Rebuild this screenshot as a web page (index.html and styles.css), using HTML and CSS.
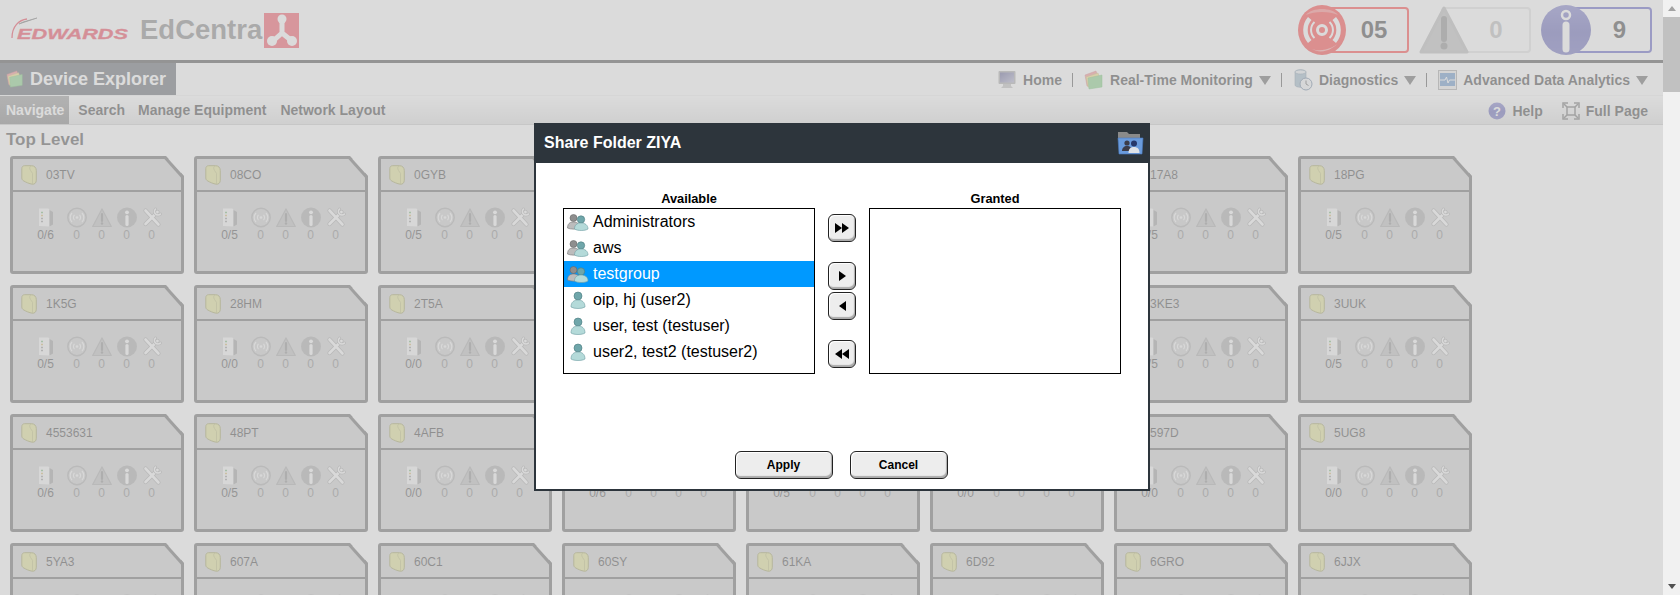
FILE: index.html
```html
<!DOCTYPE html>
<html lang="en">
<head>
  <meta charset="UTF-8" />
  <title>Device Explorer | EdCentra</title>
  <link rel="stylesheet" href="styles.css">
</head>
<body>
  <!-- shared icons -->
  <svg class="defs" aria-hidden="true">
    <defs>
      <radialGradient id="redBall" cx="50%" cy="45%" r="60%">
        <stop offset="0" stop-color="#f00"/><stop offset=".75" stop-color="#f00"/><stop offset="1" stop-color="#e00"/>
      </radialGradient>
      <linearGradient id="blueBall" x1="0" y1="0" x2="0" y2="1">
        <stop offset="0" stop-color="#5050b8"/><stop offset=".55" stop-color="#2c2c9c"/><stop offset="1" stop-color="#3a3aa8"/>
      </linearGradient>
      <linearGradient id="screen" x1="0" y1="0" x2="1" y2="1">
        <stop offset="0" stop-color="#2a2a70"/><stop offset="1" stop-color="#9a9ac0"/>
      </linearGradient>
    </defs>

    <symbol id="i-folders" viewBox="0 0 20 20">
      <path d="M1 5 12 1l1 3-9 12-1 0z" fill="#f26a6a" stroke="#c44" stroke-width=".5"/>
      <path d="M2 7 14 3l1 3-9 11-2 0z" fill="#f5d35a" stroke="#b93" stroke-width=".5"/>
      <path d="M4 8 18 5v12L5 19z" fill="#5fc35f" stroke="#3a3" stroke-width=".5"/>
    </symbol>
    <symbol id="i-folder" viewBox="0 0 16 20">
      <path d="M3.500.7h7c3 0 4.800 2 4.800 5v9.500c0 3-2 4.200-4 4-3-.4-6.500-2-8.500-3.200-1.200-.7-2-1.500-2-3V3.500C.8 1.800 2 .7 3.500.7z" fill="#d9d970" stroke="#838330"/>
      <path d="M10.500.9c-2 .2-2.300 2.500-1 4.500l2 3v11" fill="none" stroke="#a3a348" stroke-width=".8"/>
    </symbol>
    <symbol id="i-device" viewBox="0 0 20 21">
      <path d="M3 1.500h9.500l1 1.500v16.500L3 19z" fill="#f2f2f2"/>
      <path d="M13.500 3l3.500 2v12.500l-3.500 2z" fill="#808080"/>
      <path d="M5 5.500h2" stroke="#4fa04f" stroke-width="1.300"/>
      <path d="M5 8.500h2" stroke="#c8a040" stroke-width="1.300"/>
      <path d="M5 11.500h2" stroke="#777" stroke-width="1.300"/>
      <path d="M5 14.500h2" stroke="#777" stroke-width="1.300"/>
    </symbol>
    <symbol id="i-alarm" viewBox="0 0 20 20">
      <circle cx="10" cy="10" r="9.200" fill="#c0c0c0" stroke="#909090" stroke-width="1.400"/>
      <circle cx="10" cy="10" r="1.300" fill="#f4f4f4"/>
      <path d="M7.500 7.500a3.500 3.500 0 0 0 0 5M12.500 7.500a3.500 3.500 0 0 1 0 5M5 5.500a6.500 6.500 0 0 0 0 9M15 5.500a6.500 6.500 0 0 1 0 9" fill="none" stroke="#f4f4f4" stroke-width="1.100"/>
    </symbol>
    <symbol id="i-warn" viewBox="0 0 20 20">
      <path d="M10 1.500 19.300 19H.7z" fill="#a8a8a8" stroke="#8c8c8c" stroke-linejoin="round" stroke-width="1.200"/>
      <path d="M10 6.500v7" stroke="#6a6a6a" stroke-width="2.200" stroke-linecap="round"/>
      <circle cx="10" cy="16" r="1.200" fill="#6a6a6a"/>
    </symbol>
    <symbol id="i-info" viewBox="0 0 20 20">
      <circle cx="10" cy="10" r="10" fill="#8e8e8e"/>
      <circle cx="10" cy="4.800" r="1.900" fill="#f8f8f8"/>
      <path d="M10 9v8" stroke="#f8f8f8" stroke-width="3.200" stroke-linecap="round"/>
    </symbol>
    <symbol id="i-tools" viewBox="0 0 20 20">
      <g fill="none" stroke-linecap="round">
        <path d="M3.500 3l13 14M15.500 4.500 3.500 16.500" stroke="#8e8e8e" stroke-width="4.200"/>
        <path d="M3.500 3l13 14M15.500 4.500 3.500 16.500" stroke="#f8f8f8" stroke-width="2.600"/>
        <path d="M13.500 1.500a3.500 3.500 0 0 0 5 5" stroke="#8e8e8e" stroke-width="3"/>
        <path d="M13.500 1.500a3.500 3.500 0 0 0 5 5" stroke="#f8f8f8" stroke-width="1.600"/>
      </g>
    </symbol>
    <symbol id="i-group" viewBox="0 0 22 18">
      <circle cx="6.500" cy="5" r="3.500" fill="#8e8e8e" stroke="#666" stroke-width=".6"/>
      <path d="M.5 15c0-4 2-6 6-6s6 2 6 6c-3 1.500-9 1.500-12 0z" fill="#bcbcbc" stroke="#777" stroke-width=".6"/>
      <circle cx="14" cy="6.500" r="3.700" fill="#6fa6aa" stroke="#4a7a7e" stroke-width=".6"/>
      <path d="M7.500 16c0-4 2.500-6 6.500-6s7 2 7 6c-3 2-10.500 2-13.500 0z" fill="#b4dad9" stroke="#6f9ea2" stroke-width=".6"/>
    </symbol>
    <symbol id="i-user" viewBox="0 0 16 18">
      <circle cx="8" cy="5" r="4" fill="#6fa6aa" stroke="#4a7a7e" stroke-width=".6"/>
      <path d="M1 16c0-5 3-7 7-7s7 2 7 7c-3 2-11 2-14 0z" fill="#b4dad9" stroke="#6f9ea2" stroke-width=".6"/>
    </symbol>
  </svg>

  <div class="page">
    <header class="topbar">
      <div class="brand">
        <svg class="edwards" width="122" height="30" viewBox="0 0 122 30">
          <path d="M16 4C8 5 1 11 1 23" fill="none" stroke="#e8001c" stroke-width="1.300"/>
          <path d="M8 9 26 3 12 7z" fill="#333" stroke="#333" stroke-width=".6"/>
          <text x="6" y="24" textLength="111" lengthAdjust="spacingAndGlyphs" class="edwards-text">EDWARDS</text>
        </svg>
        <span class="product">EdCentra</span>
        <svg class="mark" width="35" height="35" viewBox="0 0 35 35">
          <rect width="35" height="35" fill="#f01a2e"/>
          <path d="M18 6v14M18 20 9 28M18 20l10 8" stroke="#fff" stroke-width="5"/>
          <circle cx="18" cy="6" r="4.500" fill="#fff"/><circle cx="8" cy="28" r="5" fill="#fff"/><circle cx="28" cy="28" r="5" fill="#fff"/>
        </svg>
      </div>
      <div class="badges">
        <div class="badge badge-red">
          <svg class="badge-icon" viewBox="0 0 48 50">
            <ellipse cx="24" cy="25" rx="24" ry="25" fill="url(#redBall)"/>
            <path d="M8 10C14 2 34 2 40 10 32 6 16 6 8 10z" fill="#fff" opacity=".35"/>
            <path d="M14 44C24 50 36 44 42 36 38 42 24 48 14 44z" fill="#fff" opacity=".5"/>
            <circle cx="24" cy="25" r="4.500" fill="none" stroke="#fff" stroke-width="3"/>
            <path d="M16.500 17a11 11 0 0 0 0 16M31.500 17a11 11 0 0 1 0 16" fill="none" stroke="#fff" stroke-width="2"/>
            <path d="M10 12 13.500 15a15 15 0 0 0 0 20L10 38a20 20 0 0 1 0-26zM38 12l-3.500 3a15 15 0 0 1 0 20l3.500 3a20 20 0 0 0 0-26z" fill="#fff"/>
          </svg>
          <span class="badge-num">05</span>
        </div>
        <div class="badge badge-grey">
          <svg class="badge-icon" viewBox="0 0 50 50">
            <path d="M25 3 48 47H2z" fill="#a8a8a8" stroke="#a0a0a0" stroke-width="3" stroke-linejoin="round"/>
            <path d="M25 14v20" stroke="#666" stroke-width="6" stroke-linecap="round"/>
            <circle cx="25" cy="41" r="3.500" fill="#666"/>
          </svg>
          <span class="badge-num">0</span>
        </div>
        <div class="badge badge-blue">
          <svg class="badge-icon" viewBox="0 0 50 50">
            <circle cx="25" cy="25" r="25" fill="url(#blueBall)"/>
            <circle cx="25" cy="10" r="4" fill="none" stroke="#fff" stroke-width="2.500"/>
            <path d="M25 20v24" stroke="#fff" stroke-width="7" stroke-linecap="round"/>
          </svg>
          <span class="badge-num">9</span>
        </div>
      </div>
    </header>

    <div class="titlebar">
      <div class="title">
        <svg class="ico-18"><use href="#i-folders"/></svg>
        <h1>Device Explorer</h1>
      </div>
      <nav class="mainnav">
        <a class="navlink home" href="#">
          <svg width="18" height="20" viewBox="0 0 18 20">
            <rect x=".5" y="1" width="17" height="13" rx="1" fill="#8c8c8c"/><rect x="2" y="2.500" width="14" height="10" fill="url(#screen)"/>
            <path d="M5 14h8v2l2 2H3l2-2z" fill="#a9a9a9"/>
          </svg>
          Home
        </a>
        <span class="sep"></span>
        <a class="navlink" href="#"><svg class="ico-20"><use href="#i-folders"/></svg>Real-Time Monitoring<i class="caret"></i></a>
        <span class="sep"></span>
        <a class="navlink" href="#">
          <svg width="20" height="22" viewBox="0 0 20 22">
            <path d="M2 3c0-3 11-3 11 0v13c0 3-11 3-11 0z" fill="#7ea0b8" stroke="#4a6a85" stroke-width=".6"/>
            <ellipse cx="7.500" cy="3" rx="5.500" ry="2" fill="#dfe8ee" stroke="#4a6a85" stroke-width=".6"/>
            <circle cx="13" cy="15" r="6" fill="#eef2f4" stroke="#3a5a80"/><path d="M13 11.500V15l2.500 1.500" fill="none" stroke="#333"/>
          </svg>
          Diagnostics<i class="caret"></i>
        </a>
        <span class="sep"></span>
        <a class="navlink" href="#">
          <svg width="19" height="20" viewBox="0 0 19 20">
            <rect x=".5" y=".5" width="18" height="19" fill="#e6e6e6" stroke="#888"/><rect x="2" y="3" width="15" height="13" fill="#2f6fb8"/>
            <path d="M2 10h5l1.500-3 1.500 6 1.500-3H17" fill="none" stroke="#fff"/>
          </svg>
          Advanced Data Analytics<i class="caret"></i>
        </a>
      </nav>
    </div>

    <div class="subnav">
      <div class="tabs">
        <a class="tab active" href="#">Navigate</a>
        <a class="tab short" href="#">Search</a>
        <a class="tab" href="#">Manage Equipment</a>
        <a class="tab" href="#">Network Layout</a>
      </div>
      <div class="tools">
        <a class="navlink" href="#">
          <svg class="ico-18" viewBox="0 0 18 18">
            <circle cx="9" cy="9" r="8.500" fill="url(#blueBall)"/>
            <text x="9" y="14" class="help-mark">?</text>
          </svg>
          Help
        </a>
        <a class="navlink" href="#">
          <svg class="ico-18" viewBox="0 0 18 18" fill="none" stroke="#444" stroke-width="1.500">
            <path d="M1 6V1h5M12 1h5v5M17 12v5h-5M6 17H1v-5"/><rect x="5" y="5" width="8" height="8"/>
            <path d="M2 2l3 3M16 2l-3 3M16 16l-3-3M2 16l3-3"/>
          </svg>
          Full Page
        </a>
      </div>
    </div>

    <main class="content">
      <h2>Top Level</h2>
      <div class="card-grid" id="cardGrid"></div>
    </main>

    <!-- dims the page behind the dialog -->
    <div class="dimmer"></div>

    <section class="dialog">
      <div class="dialog-head">
        <h3>Share Folder ZIYA</h3>
        <svg width="27" height="24" viewBox="0 0 27 24">
          <path d="M1 1h9l2 2h11v6H1z" fill="#8a8a8a"/>
          <path d="M1 7h25l-1 16H2z" fill="#6a9bdc" stroke="#4a7ac0" stroke-width=".6"/>
          <circle cx="10" cy="12" r="2.600" fill="#3c3c48"/><path d="M5 20c0-3 2-5 5-5s5 2 5 5z" fill="#3c3c48"/>
          <circle cx="17" cy="12.500" r="3" fill="#26386a"/><path d="M11.500 22c0-4 2-6 5.500-6s5.500 2 5.500 6z" fill="#dfe3e8"/>
        </svg>
      </div>
      <div class="dialog-body">
        <div class="picker">
          <div class="pick-col">
            <div class="pick-label">Available</div>
            <ul class="listbox">
              <li><svg class="ico-group"><use href="#i-group"/></svg>Administrators</li>
              <li><svg class="ico-group"><use href="#i-group"/></svg>aws</li>
              <li class="selected"><svg class="ico-group"><use href="#i-group"/></svg>testgroup</li>
              <li><svg class="ico-group"><use href="#i-user"/></svg>oip, hj (user2)</li>
              <li><svg class="ico-group"><use href="#i-user"/></svg>user, test (testuser)</li>
              <li><svg class="ico-group"><use href="#i-user"/></svg>user2, test2 (testuser2)</li>
            </ul>
          </div>
          <div class="moves">
            <button class="move" type="button"><i class="tri"></i><i class="tri"></i></button>
            <button class="move far" type="button"><i class="tri"></i></button>
            <button class="move" type="button"><i class="tri back"></i></button>
            <button class="move far" type="button"><i class="tri back"></i><i class="tri back"></i></button>
          </div>
          <div class="pick-col">
            <div class="pick-label">Granted</div>
            <ul class="listbox"></ul>
          </div>
        </div>
        <div class="dialog-actions">
          <button class="btn" type="button">Apply</button>
          <button class="btn" type="button">Cancel</button>
        </div>
      </div>
    </section>
  </div>

  <div class="scrollbar">
    <i class="arrow-up"></i>
    <div class="thumb"></div>
    <i class="arrow-down"></i>
  </div>

  <script src="script.js"></script>
</body>
</html>
```

FILE: styles.css
```css
/* Reset and base styles */
* {
  box-sizing: border-box;
  margin: 0;
  padding: 0;
}
body {
  font-family: "Liberation Sans", Arial, sans-serif;
  background-color: #fff;
  color: #000;
  display: flex;
  height: 100vh;
  overflow: hidden;
}
a {
  color: inherit;
  text-decoration: none;
}
svg {
  display: block;
  flex: none;
}
.defs {
  position: absolute;
  width: 0;
  height: 0;
}
.ico-18 { width: 18px; height: 18px; }
.ico-20 { width: 20px; height: 20px; }

.page {
  flex: 1;
  min-width: 0;
  position: relative;
  overflow: hidden;
}

/* Top bar */
.topbar {
  height: 63px;
  border-bottom: 3px solid #111;
  display: flex;
  justify-content: space-between;
  padding-right: 11px;
}
.brand {
  display: flex;
  align-items: center;
  padding-left: 11px;
}
.edwards-text {
  font: italic bold 15px "Liberation Sans", Arial, sans-serif;
  fill: #e8001c;
  stroke: #e8001c;
  stroke-width: 0.35px;
}
.product {
  font-size: 27.5px;
  font-weight: bold;
  color: #5a5a5a;
  margin-left: 7px;
}
.mark { margin-left: 2px; }

.badges {
  display: flex;
  gap: 10px;
  padding-top: 5px;
}
.badge {
  display: flex;
  width: 112px;
  height: 50px;
  position: relative;
  align-items: center;
}
.badge::before {
  content: "";
  position: absolute;
  left: 22px;
  right: 0;
  top: 2px;
  bottom: 2px;
  border: 2px solid;
  border-radius: 4px;
}
.badge-red { color: #f00; }
.badge-grey { color: #d9d9d9; width: 112px; }
.badge-blue { color: #2b2bb1; width: 111px; }
.badge-icon {
  width: 50px;
  height: 50px;
  position: relative;
}
.badge-num {
  flex: 1;
  text-align: center;
  font-size: 24px;
  font-weight: bold;
  color: #000;
}
.badge-red .badge-num { padding-right: 8px; }
.badge-grey .badge-num { color: #a4a4a4; padding-right: 8px; }
.badge-blue .badge-num { padding-right: 4px; }

/* Title row */
.titlebar {
  height: 32px;
  display: flex;
  justify-content: space-between;
}
.title {
  width: 176px;
  background-color: #2d353c;
  display: flex;
  align-items: center;
  gap: 6px;
  padding-left: 6px;
}
.title h1 {
  font-size: 18px;
  color: #fff;
}
.mainnav {
  display: flex;
  align-items: center;
  padding: 2px 15px 0 0;
}
.navlink {
  display: flex;
  align-items: center;
  gap: 6px;
  font-size: 14px;
  font-weight: bold;
}
.navlink.home { gap: 7px; }
.sep {
  width: 1px;
  height: 14px;
  background-color: #222;
  margin: 0 11px 0 10px;
}
.caret {
  width: 0;
  height: 0;
  border-left: 6px solid transparent;
  border-right: 6px solid transparent;
  border-top: 9px solid #333;
}

/* Sub navigation */
.subnav {
  height: 30px;
  display: flex;
  justify-content: space-between;
  background: linear-gradient(#fff, #d8d8d8);
  border-top: 1px solid #eee;
  border-bottom: 1px solid #bbb;
}
.tabs {
  display: flex;
  align-items: stretch;
  font-size: 14px;
  font-weight: bold;
}
.tab {
  display: flex;
  align-items: center;
  padding: 0 5px 0 6px;
  margin-right: 3px;
}
.tab.short { margin-right: 2px; }
.tab.active {
  background: linear-gradient(#777, #555);
  color: #fff;
}
.tools {
  display: flex;
  align-items: center;
  gap: 19px;
  padding: 1px 15px 0 0;
}
.help-mark {
  font: bold 13px "Liberation Sans", Arial, sans-serif;
  fill: #fff;
  text-anchor: middle;
}

/* Folder cards */
.content h2 {
  font-size: 17px;
  line-height: 30px;
  padding-left: 6px;
  color: #111;
}
.card-grid {
  display: grid;
  grid-template-columns: repeat(8, 174px);
  gap: 11px 10px;
  padding: 1px 0 0 10px;
}
.card {
  position: relative;
  height: 118px;
  background-color: #c1c1c1;
  border: 3px solid #393939;
  border-radius: 3px;
  clip-path: polygon(0 0, 156px 0, 174px 20px, 174px 100%, 0 100%);
}
.card::after {
  content: "";
  position: absolute;
  left: 146px;
  top: 6.5px;
  width: 30px;
  height: 3px;
  background-color: #393939;
  transform: rotate(48deg);
}
.card-head {
  height: 33px;
  border-bottom: 2px solid #393939;
  display: flex;
  align-items: center;
  gap: 9px;
  padding-left: 8px;
  font-size: 12px;
}
.card-head svg {
  width: 16px;
  height: 20px;
}
.card-stats {
  display: flex;
  padding: 15px 0 0 20px;
}
.stat {
  width: 25px;
  display: flex;
  flex-direction: column;
  align-items: center;
  font-size: 12px;
  line-height: 14px;
  color: #5d5d5d;
}
.stat svg {
  width: 20px;
  height: 21px;
}
.stat.devices {
  margin-right: 6px;
  color: #111;
}

/* Overlay and dialog */
.dimmer {
  position: absolute;
  top: 0;
  left: 0;
  right: 0;
  bottom: 0;
  background-color: rgba(204, 204, 204, 0.7);
}
.dialog {
  position: absolute;
  left: 534px;
  top: 123px;
  width: 616px;
  height: 368px;
  background-color: #fff;
  border: 2px solid #2d353c;
  border-top: 0;
}
.dialog-head {
  height: 40px;
  background-color: #2d353c;
  display: flex;
  align-items: center;
  justify-content: space-between;
  margin: 0 -2px;
  padding: 0 6px 0 10px;
}
.dialog-head h3 {
  font-size: 16px;
  color: #fff;
}
.dialog-body {
  padding: 29px 27px 0;
}
.picker {
  display: flex;
}
.pick-col {
  width: 252px;
}
.pick-label {
  font-size: 12.8px;
  font-weight: bold;
  line-height: 14px;
  padding-bottom: 2px;
  text-align: center;
}
.listbox {
  list-style: none;
  height: 166px;
  border: 1px solid #000;
  font-size: 16px;
}
.listbox li {
  height: 26px;
  display: flex;
  align-items: center;
  gap: 4px;
  padding-left: 3px;
}
.listbox li.selected {
  background-color: #09f;
  color: #fff;
}
.ico-group {
  width: 22px;
  height: 18px;
}
.moves {
  width: 54px;
  padding-top: 22px;
  display: flex;
  flex-direction: column;
  align-items: center;
  gap: 2px;
}
.move {
  width: 28px;
  height: 28px;
  display: flex;
  align-items: center;
  justify-content: center;
  background-color: #ededed;
  border: 1px solid #222;
  border-radius: 6px;
  box-shadow: inset -1px -2px 1px #aaa, inset 1px 1px 1px #fff;
}
.move.far { margin-top: 18px; }
.tri {
  width: 0;
  height: 0;
  border-top: 5px solid transparent;
  border-bottom: 5px solid transparent;
  border-left: 7px solid #000;
}
.tri.back {
  border-left: 0;
  border-right: 7px solid #000;
}
.dialog-actions {
  display: flex;
  justify-content: center;
  gap: 17px;
  margin-top: 77px;
  padding-right: 2px;
}
.btn {
  width: 98px;
  height: 28px;
  font-family: inherit;
  font-size: 12px;
  font-weight: bold;
  color: #000;
  background-color: #ededed;
  border: 1px solid #222;
  border-radius: 6px;
  box-shadow: inset -1px -2px 1px #aaa, inset 1px 1px 1px #fff;
}

/* Browser scrollbar */
.scrollbar {
  width: 17px;
  flex: none;
  background-color: #f1f1f1;
  position: relative;
  display: flex;
  flex-direction: column;
  align-items: center;
}
.arrow-up {
  width: 0;
  height: 0;
  margin: 6px 0 6px;
  border-left: 4px solid transparent;
  border-right: 4px solid transparent;
  border-bottom: 5px solid #a3a3a3;
}
.thumb {
  width: 100%;
  height: 75px;
  background-color: #c1c1c1;
}
.arrow-down {
  width: 0;
  height: 0;
  margin: auto 0 6px;
  border-left: 4px solid transparent;
  border-right: 4px solid transparent;
  border-top: 5px solid #505050;
}
```

FILE: script.js
```js
// folder name + devices online/total, in the order the grid shows them
const folders = [
  ['03TV', '0/6'], ['08CO', '0/5'], ['0GYB', '0/5'], ['0PKR', '0/6'], ['0T4M', '0/5'], ['10BF', '0/0'], ['17A8', '0/5'], ['18PG', '0/5'],
  ['1K5G', '0/5'], ['28HM', '0/0'], ['2T5A', '0/0'], ['2WDN', '0/6'], ['30LA', '0/5'], ['3AZE', '0/0'], ['3KE3', '0/5'], ['3UUK', '0/5'],
  ['4553631', '0/6'], ['48PT', '0/5'], ['4AFB', '0/0'], ['4RTK', '0/6'], ['4YQ2', '0/5'], ['52AC', '0/0'], ['597D', '0/0'], ['5UG8', '0/0'],
  ['5YA3', '0/6'], ['607A', '0/5'], ['60C1', '0/0'], ['60SY', '0/6'], ['61KA', '0/5'], ['6D92', '0/0'], ['6GRO', '0/0'], ['6JJX', '0/0']
];

const icons = ['alarm', 'warn', 'info', 'tools'];
const grid = document.getElementById('cardGrid');

folders.forEach(([name, devices]) => {
  const stats = icons.map(icon =>
    `<div class="stat"><svg><use href="#i-${icon}"/></svg>0</div>`
  ).join('');

  grid.insertAdjacentHTML('beforeend', `
    <article class="card">
      <div class="card-head"><svg><use href="#i-folder"/></svg>${name}</div>
      <div class="card-stats">
        <div class="stat devices"><svg><use href="#i-device"/></svg>${devices}</div>
        ${stats}
      </div>
    </article>`);
});
```
